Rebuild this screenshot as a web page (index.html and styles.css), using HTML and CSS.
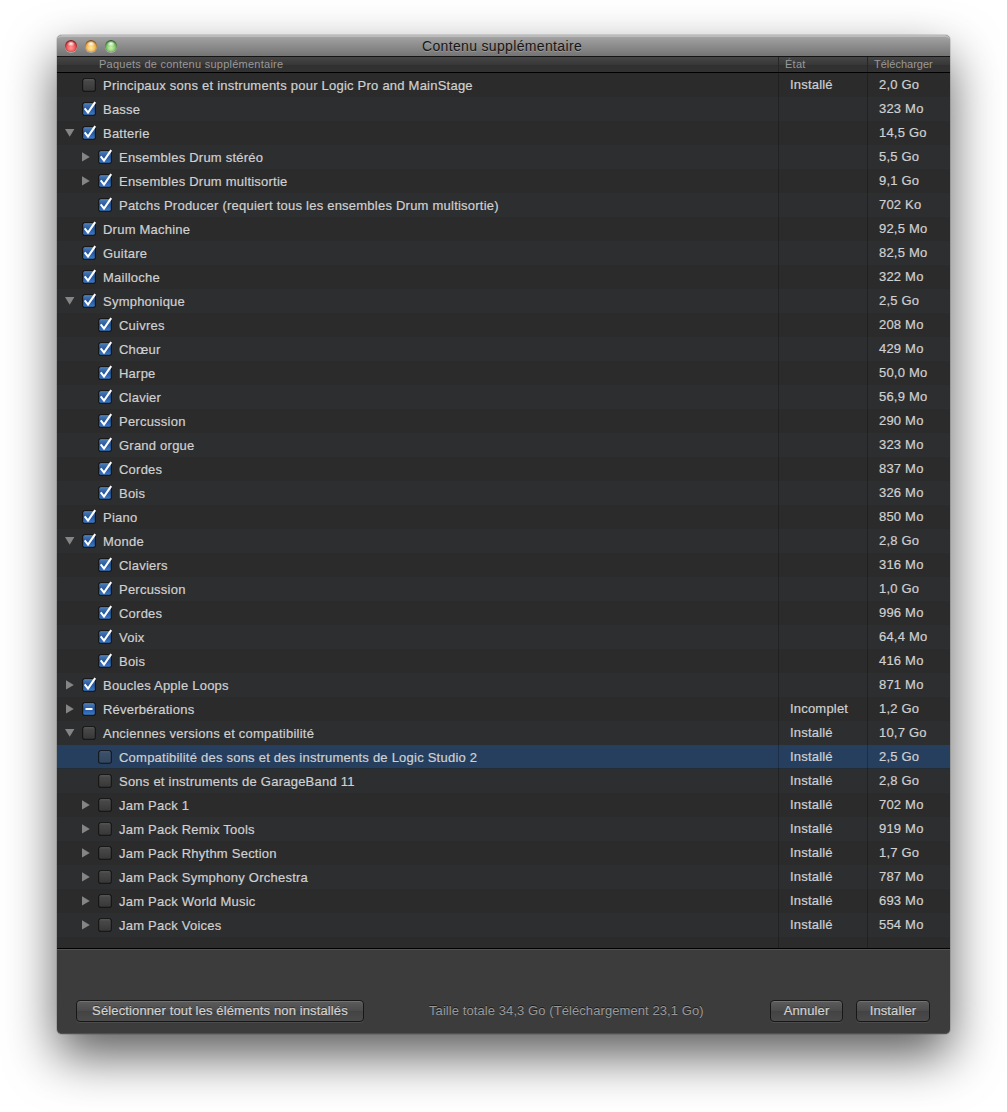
FILE: index.html
```html
<!DOCTYPE html>
<html lang="fr">
<head>
    <meta charset="UTF-8">
    <meta name="viewport" content="width=device-width, initial-scale=1.0">
    <title>Contenu supplémentaire</title>
    <link rel="stylesheet" href="styles.css">
</head>
<body>
    <svg class="hidden">
        <defs>
            <linearGradient id="blue" x1="0" y1="0" x2="0" y2="1">
                <stop offset="0" stop-color="#4f7cb4"/>
                <stop offset="0.5" stop-color="#2558a0"/>
                <stop offset="1" stop-color="#3c7ac8"/>
            </linearGradient>
            <linearGradient id="gray" x1="0" y1="0" x2="0" y2="1">
                <stop offset="0" stop-color="#4b4b4c"/>
                <stop offset="1" stop-color="#383839"/>
            </linearGradient>
            <linearGradient id="slate" x1="0" y1="0" x2="0" y2="1">
                <stop offset="0" stop-color="#3d5069"/>
                <stop offset="1" stop-color="#314761"/>
            </linearGradient>
        </defs>
    </svg>

    <div class="window">
        <div class="titlebar">
            <div class="lights">
                <span class="light red"></span>
                <span class="light yellow"></span>
                <span class="light green"></span>
            </div>
            <h1>Contenu supplémentaire</h1>
        </div>

        <div class="header">
            <span class="col-name">Paquets de contenu supplémentaire</span>
            <span class="col-state">État</span>
            <span class="col-size">Télécharger</span>
        </div>

        <div class="list" id="list"></div>

        <div class="footer">
            <button class="select-all">Sélectionner tout les éléments non installés</button>
            <p class="total">Taille totale 34,3 Go (Téléchargement 23,1 Go)</p>
            <button class="cancel">Annuler</button>
            <button class="install">Installer</button>
        </div>
    </div>

    <script>
        // [niveau, flèche, case, nom, état, taille]
        const packages = [
            [0, '', 'off', 'Principaux sons et instruments pour Logic Pro and MainStage', 'Installé', '2,0 Go'],
            [0, '', 'on', 'Basse', '', '323 Mo'],
            [0, 'open', 'on', 'Batterie', '', '14,5 Go'],
            [1, 'closed', 'on', 'Ensembles Drum stéréo', '', '5,5 Go'],
            [1, 'closed', 'on', 'Ensembles Drum multisortie', '', '9,1 Go'],
            [1, '', 'on', 'Patchs Producer (requiert tous les ensembles Drum multisortie)', '', '702 Ko'],
            [0, '', 'on', 'Drum Machine', '', '92,5 Mo'],
            [0, '', 'on', 'Guitare', '', '82,5 Mo'],
            [0, '', 'on', 'Mailloche', '', '322 Mo'],
            [0, 'open', 'on', 'Symphonique', '', '2,5 Go'],
            [1, '', 'on', 'Cuivres', '', '208 Mo'],
            [1, '', 'on', 'Chœur', '', '429 Mo'],
            [1, '', 'on', 'Harpe', '', '50,0 Mo'],
            [1, '', 'on', 'Clavier', '', '56,9 Mo'],
            [1, '', 'on', 'Percussion', '', '290 Mo'],
            [1, '', 'on', 'Grand orgue', '', '323 Mo'],
            [1, '', 'on', 'Cordes', '', '837 Mo'],
            [1, '', 'on', 'Bois', '', '326 Mo'],
            [0, '', 'on', 'Piano', '', '850 Mo'],
            [0, 'open', 'on', 'Monde', '', '2,8 Go'],
            [1, '', 'on', 'Claviers', '', '316 Mo'],
            [1, '', 'on', 'Percussion', '', '1,0 Go'],
            [1, '', 'on', 'Cordes', '', '996 Mo'],
            [1, '', 'on', 'Voix', '', '64,4 Mo'],
            [1, '', 'on', 'Bois', '', '416 Mo'],
            [0, 'closed', 'on', 'Boucles Apple Loops', '', '871 Mo'],
            [0, 'closed', 'mixed', 'Réverbérations', 'Incomplet', '1,2 Go'],
            [0, 'open', 'off', 'Anciennes versions et compatibilité', 'Installé', '10,7 Go'],
            [1, '', 'off', 'Compatibilité des sons et des instruments de Logic Studio 2', 'Installé', '2,5 Go'],
            [1, '', 'off', 'Sons et instruments de GarageBand 11', 'Installé', '2,8 Go'],
            [1, 'closed', 'off', 'Jam Pack 1', 'Installé', '702 Mo'],
            [1, 'closed', 'off', 'Jam Pack Remix Tools', 'Installé', '919 Mo'],
            [1, 'closed', 'off', 'Jam Pack Rhythm Section', 'Installé', '1,7 Go'],
            [1, 'closed', 'off', 'Jam Pack Symphony Orchestra', 'Installé', '787 Mo'],
            [1, 'closed', 'off', 'Jam Pack World Music', 'Installé', '693 Mo'],
            [1, 'closed', 'off', 'Jam Pack Voices', 'Installé', '554 Mo']
        ];
        const selected = 28;

        const arrows = {
            '': '',
            open: '<path d="M0 1H9.4L4.7 8.8Z"/>',
            closed: '<path d="M1 0.2L8.8 4.9L1 9.6Z"/>'
        };
        const marks = {
            on: '<path class="tick" d="M3.7 7.4L7 11.6L14.2 1.2"/>',
            mixed: '<path class="dash" d="M4.5 8H11.5"/>',
            off: ''
        };

        function checkbox(state, isSelected) {
            const fill = state !== 'off' ? 'blue' : isSelected ? 'slate' : 'gray';
            return `<svg class="check ${state}" width="16" height="16" viewBox="0 0 16 16">
                <rect class="edge" x="1.2" y="1.2" width="13.6" height="13.6" rx="2.6"/>
                <rect x="2.2" y="2.2" width="11.6" height="11.6" rx="1.6" fill="url(#${fill})"/>
                <path class="shine" d="M3.2 2.7H12.8"/>
                ${marks[state]}
            </svg>`;
        }

        const list = document.getElementById('list');
        packages.forEach(([level, arrow, state, name, status, size], i) => {
            const row = document.createElement('div');
            row.className = 'row level' + level + (i === selected ? ' selected' : '');
            row.innerHTML = `
                <div class="col-name">
                    <svg class="arrow" width="10" height="10" viewBox="0 0 10 10">${arrows[arrow]}</svg>
                    ${checkbox(state, i === selected)}
                    <span>${name}</span>
                </div>
                <div class="col-state">${status}</div>
                <div class="col-size">${size}</div>`;
            list.appendChild(row);
        });
        const filler = document.createElement('div');
        filler.className = 'row filler';
        filler.innerHTML = '<div class="col-name"></div><div class="col-state"></div><div class="col-size"></div>';
        list.appendChild(filler);
    </script>
</body>
</html>
```
FILE: styles.css
```css
* {
    box-sizing: border-box;
}
body {
    margin: 0;
    padding: 35px 57px 0;
    height: 1112px;
    overflow: hidden;
    background: #fff;
    font-family: "Liberation Sans", Arial, sans-serif;
    font-size: 13px;
    color: #d0d0d0;
}
.hidden {
    position: absolute;
    width: 0;
    height: 0;
}
.window {
    display: flex;
    flex-direction: column;
    width: 893px;
    height: 999px;
    border-radius: 5px;
    background: #3c3c3c;
    box-shadow: 0 0 0 1px rgba(0, 0, 0, 0.12), 0 22px 50px rgba(0, 0, 0, 0.64);
}

/* barre de titre */
.titlebar {
    position: relative;
    height: 22px;
    border-radius: 5px 5px 0 0;
    border-top: 2px solid #bcbcbc;
    border-bottom: 1px solid #141414;
    background: linear-gradient(#a2a2a2, #747474);
}
.titlebar h1 {
    margin: 0;
    padding-right: 3px;
    font-size: 14px;
    font-weight: normal;
    line-height: 19px;
    letter-spacing: 0.34px;
    text-align: center;
    color: #161616;
    text-shadow: 0 1px 0 rgba(255, 255, 255, 0.2);
}
.lights {
    position: absolute;
    left: 8px;
    top: 3px;
    display: flex;
    gap: 8px;
}
.light {
    width: 12px;
    height: 12px;
    border-radius: 50%;
    box-shadow: inset 0 1px 2px rgba(0, 0, 0, 0.55), 0 1px 0 rgba(255, 255, 255, 0.35);
}
.red {
    background: radial-gradient(ellipse 4px 3px at 50% 30%, #fff 0, transparent), radial-gradient(circle at 50% 65%, #ff9c98 0, #ee4548 55%, #8f1419 100%);
}
.yellow {
    background: radial-gradient(ellipse 4px 3px at 50% 30%, #fff 0, transparent), radial-gradient(circle at 50% 65%, #ffeb9b 0, #f2ae4c 55%, #8c4c10 100%);
}
.green {
    background: radial-gradient(ellipse 4px 3px at 50% 30%, #fff 0, transparent), radial-gradient(circle at 50% 65%, #ccf5a6 0, #74bd62 55%, #24651f 100%);
}

/* colonnes */
.header,
.row {
    display: grid;
    grid-template-columns: 721px 89px 83px;
}
.header {
    height: 16px;
    border-bottom: 1px solid #000;
    background: linear-gradient(#464646, #383838 50%, #303030 51%, #323232);
    font-size: 11px;
    line-height: 15px;
    letter-spacing: 0.25px;
    color: #999;
}
.header .col-name {
    padding-left: 42px;
}
.header .col-state,
.header .col-size {
    padding-left: 6px;
    border-left: 1px solid #262626;
}
.header .col-size {
    letter-spacing: 0;
}
.list {
    height: 876px;
    overflow: hidden;
    border-bottom: 1px solid #000;
}
.row {
    height: 24px;
    line-height: 24px;
    letter-spacing: 0.2px;
    background: #2b2b2b;
    -webkit-text-stroke: 0.2px #d0d0d0;
}
.row:nth-child(even) {
    background: #2d2e30;
}
.row.selected {
    background: #263f5e;
    border-bottom: 1px solid #242c35;
}
.row .col-name {
    display: flex;
    align-items: center;
    height: 24px;
    padding-left: 8px;
    padding-top: 1px;
    letter-spacing: 0.23px;
}
.row.level1 .col-name {
    padding-left: 24px;
}
.row .col-state,
.row .col-size {
    padding-left: 11px;
    border-left: 1px solid rgba(0, 0, 0, 0.25);
}
.arrow {
    margin: 0 6px 2px 0;
    fill: #858585;
}
.check {
    margin: 0 6px 2px 0;
}
.check .edge {
    fill: #121212;
}
.check .shine {
    stroke: rgba(255, 255, 255, 0.14);
}
.check .tick {
    fill: none;
    stroke: #fff;
    stroke-width: 2.1;
}
.check .dash {
    stroke: #fff;
    stroke-width: 2;
}

/* pied de fenêtre */
.footer {
    display: flex;
    align-items: flex-start;
    flex: 1;
    padding: 50px 20px 0 19px;
    border-top: 1px solid #535353;
    border-bottom: 1px solid #505050;
    border-radius: 0 0 5px 5px;
}
button {
    height: 22px;
    padding: 0;
    border: 1px solid #171717;
    border-radius: 4px;
    background: linear-gradient(#5c5c5c, #4b4b4b 50%, #434343 51%, #4b4b4b);
    box-shadow: inset 0 1px 0 #727272, 0 1px 0 rgba(255, 255, 255, 0.08);
    font: inherit;
    letter-spacing: 0.13px;
    line-height: 20px;
    color: #d2d2d2;
    text-shadow: 0 -1px 0 rgba(0, 0, 0, 0.4);
    -webkit-text-stroke: 0.2px #d2d2d2;
}
.select-all {
    width: 288px;
}
.total {
    flex: 1;
    margin: 0;
    padding-left: 65px;
    line-height: 21px;
    letter-spacing: 0.08px;
    color: #999;
    text-shadow: 0 -1px 0 #1c1c1c;
}
.cancel {
    width: 73px;
    margin-right: 13px;
}
.install {
    width: 74px;
}
```
